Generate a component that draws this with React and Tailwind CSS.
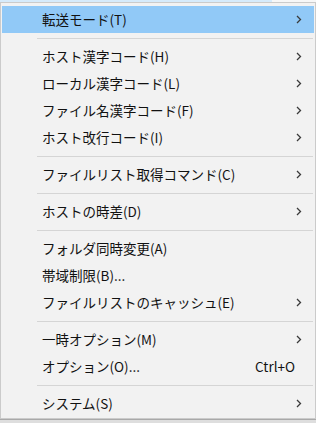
import React from "react";

const items = [
  { label: "転送モード(T)", sub: true, active: true },
  { sep: true },
  { label: "ホスト漢字コード(H)", sub: true },
  { label: "ローカル漢字コード(L)", sub: true },
  { label: "ファイル名漢字コード(F)", sub: true },
  { label: "ホスト改行コード(I)", sub: true },
  { sep: true },
  { label: "ファイルリスト取得コマンド(C)", sub: true },
  { sep: true },
  { label: "ホストの時差(D)", sub: true },
  { sep: true },
  { label: "フォルダ同時変更(A)" },
  { label: "帯域制限(B)..." },
  { label: "ファイルリストのキャッシュ(E)", sub: true },
  { sep: true },
  { label: "一時オプション(M)", sub: true },
  { label: "オプション(O)...", shortcut: "Ctrl+O" },
  { sep: true },
  { label: "システム(S)", sub: true },
];

const Chevron = () => (
  <svg width="6" height="9" viewBox="0 0 6 9" className="block">
    <polyline
      points="1,1 4.5,4.5 1,8"
      fill="none"
      stroke="#3a3a3a"
      strokeWidth="1.3"
    />
  </svg>
);

const App = () => {
  return (
    <div
      className="w-[316px] h-[423px] overflow-hidden bg-white flex flex-col"
      style={{ fontFamily: '"Noto Sans CJK JP", "Noto Sans", sans-serif' }}
    >
      {/* window behind, top edge */}
      <div className="h-[2px] flex shrink-0">
        <div className="w-[272px] bg-[#d6ebfb]" />
        <div className="flex-1 bg-[#f7f7f7]" />
      </div>

      {/* menu */}
      <div className="h-[417px] shrink-0 border border-[#cbcbcb] bg-[#f2f2f2] px-px pt-[3px] flex flex-col">
        {items.map((item, i) =>
          item.sep ? (
            <div key={i} className="h-[10px] flex items-center pl-[35px] pr-px">
              <div className="h-px w-full bg-[#d5d5d5]" />
            </div>
          ) : (
            <div
              key={i}
              className={`h-[27px] flex items-center pl-[40px] pr-[12px] text-[13.5px] text-[#111] ${
                item.active ? "bg-[#91c9f7]" : ""
              }`}
            >
              <span className="flex-1 leading-none">{item.label}</span>
              {item.shortcut && (
                <span className="mr-[7px] leading-none">{item.shortcut}</span>
              )}
              {item.sub && <Chevron />}
            </div>
          )
        )}
      </div>

      {/* window behind, bottom edge */}
      <div className="flex-1 bg-[#dedede] border-t border-[#a9a9a9]" />
    </div>
  );
};

export default App;
